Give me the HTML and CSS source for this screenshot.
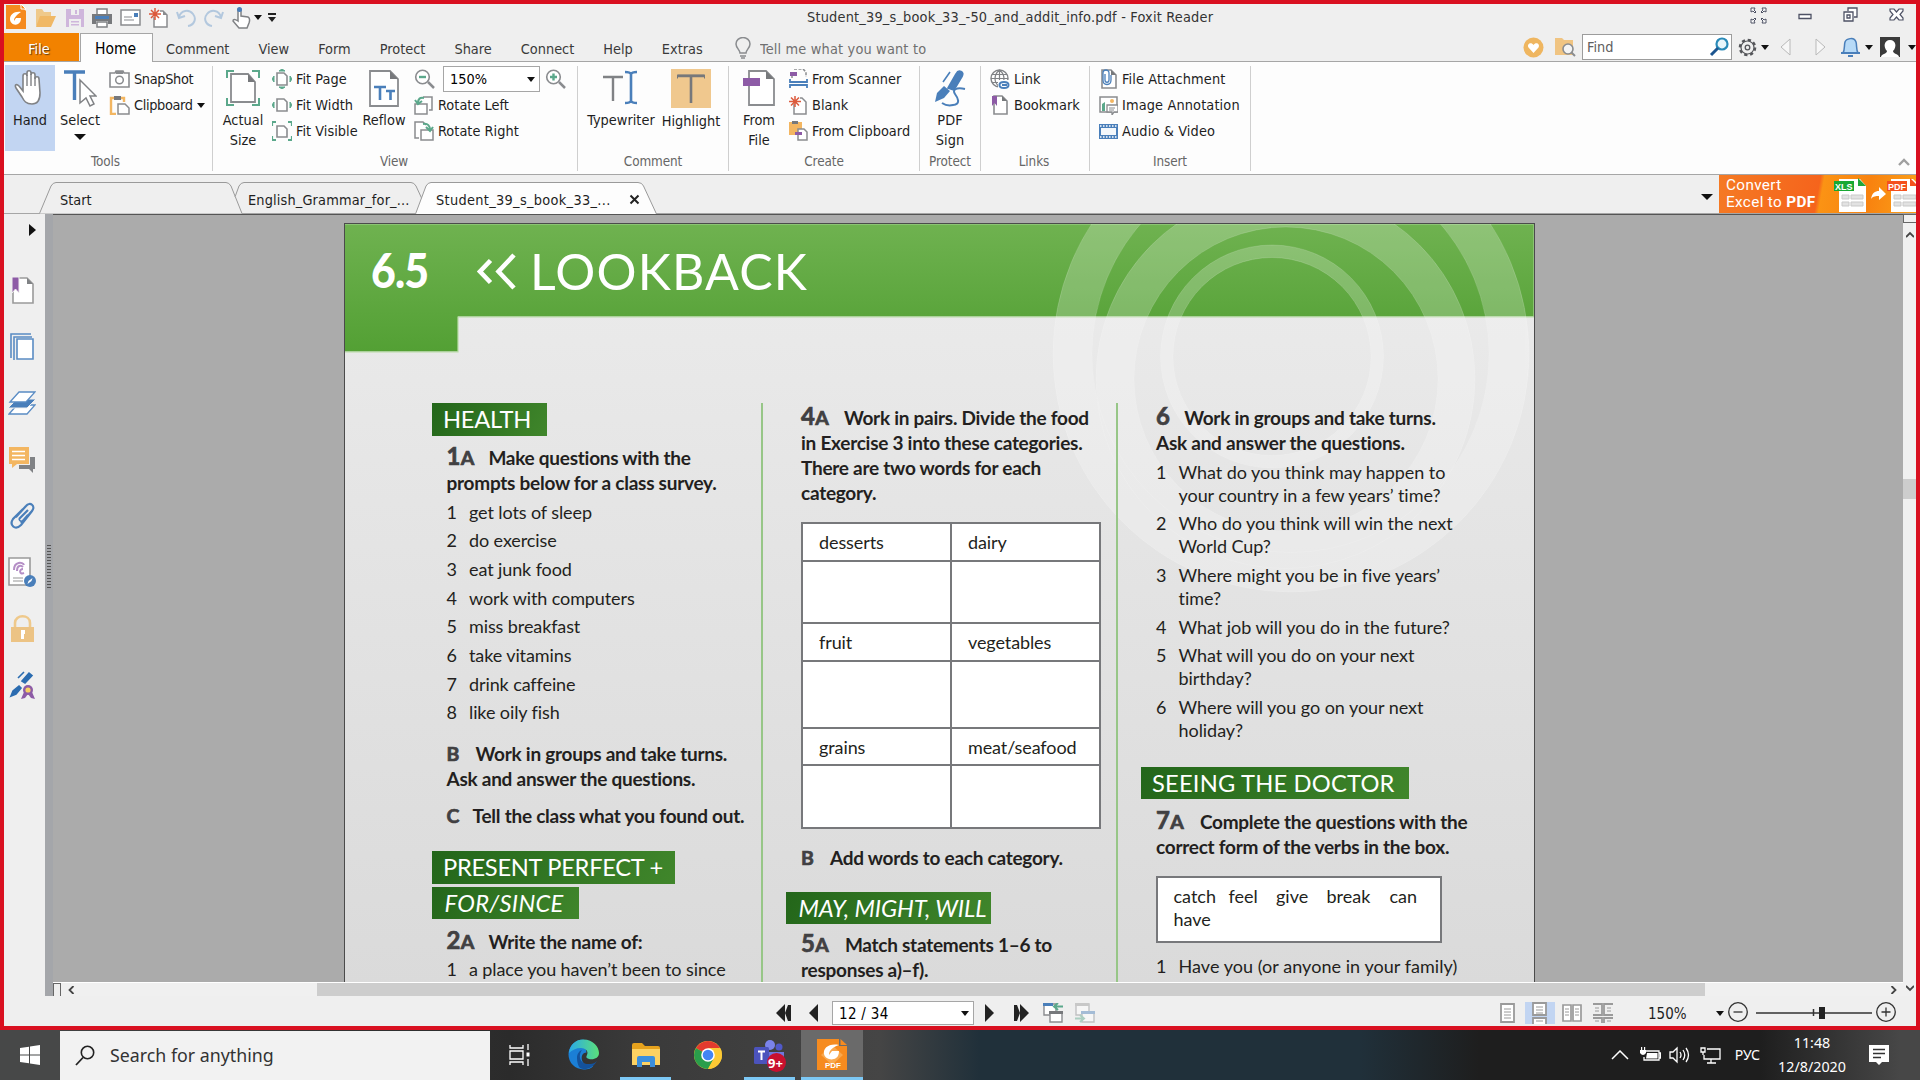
FILE: index.html
```html
<!DOCTYPE html>
<html lang="en">
<head>
<meta charset="utf-8">
<title>Foxit Reader</title>
<link rel="stylesheet" href="styles.css">
</head>
<body>
<div class="window">

  <header class="titlebar">
    <div class="quick">
      <svg class="q-logo" width="20" height="25" viewBox="0 0 20 25"><path d="M0 1h14l6 6v18H0z" fill="#f58a1f"/><path d="M15 0l5 5h-5z" fill="#f58a1f" stroke="#fff" stroke-width="1"/><path d="M15 8C8 7 4 11 4 15s4 7 8 5c2-1 3-3 3-6h-5l-2 3c0-4 3-6 7-9z" fill="#fff"/></svg>
      <svg class="q-open" width="21" height="20" viewBox="0 0 21 20"><path d="M1 18V1h6l2 3h7v4" fill="#efc98b"/><path d="M1 19l4-11h16l-5 11z" fill="#f0b866"/></svg>
      <svg class="q-save" width="18" height="20" viewBox="0 0 18 20"><path d="M0 1h18v18H0z" fill="#cfb6dc"/><path d="M5 1h8v6H5zM3 11h12v8H3z" fill="#efefef"/><path d="M9 2h2v4H9zM5 13h8v1.500H5zM5 16h8v1.500H5z" fill="#cfb6dc"/></svg>
      <svg class="q-print" width="20" height="20" viewBox="0 0 20 20"><path d="M5 1h10v6H5zM5 14h10v5H5z" fill="#fff" stroke="#808285" stroke-width="1.500"/><path d="M0 6h20v10h-4v-3H4v3H0z" fill="#77797c"/><path d="M3 8h14v3H3z" fill="#4a7fba"/></svg>
      <svg class="q-mail" width="21" height="17" viewBox="0 0 21 17"><path d="M1 1h19v15H1z" fill="#fff" stroke="#8a8c8f" stroke-width="1.500"/><path d="M4 8h8M4 11h10" stroke="#8a8c8f" stroke-width="1.200"/><path d="M14 4h4v4h-4z" fill="#4a7fba"/></svg>
      <svg class="q-new" width="19" height="20" viewBox="0 0 19 20"><path d="M5 9v10h13V7l-4-4h-3" fill="#fff" stroke="#8a8c8f" stroke-width="1.500"/><path d="M14 3v4h4z" fill="#8a8c8f"/><path d="M6 0v12M0 6h12M2 2l8 8M10 2l-8 8" stroke="#dc5a3c" stroke-width="1.500"/></svg>
      <svg class="q-undo" width="20" height="20" viewBox="0 0 20 20"><path d="M3 9C5 2 13 1 17 6s1 11-5 12M1 4l2 6 6-2" fill="none" stroke="#b3c8de" stroke-width="2"/></svg>
      <svg class="q-redo" width="20" height="20" viewBox="0 0 20 20"><path d="M17 9C15 2 7 1 3 6s-1 11 5 12M19 4l-2 6-6-2" fill="none" stroke="#b3c8de" stroke-width="2"/></svg>
      <svg class="q-touch" width="19" height="22" viewBox="0 0 19 22"><path d="M6 13V3c0-2 3-2 3 0v6l7 1c2 1 2 3 1 6l-2 5H7l-6-7c0-2 2-2 5 0z" fill="#fff" stroke="#808285" stroke-width="1.500"/><circle cx="7.500" cy="2.500" r="2.500" fill="#4a7fba"/></svg>
      <i class="arrow q-a1"></i>
      <svg class="q-a2" width="8" height="9" viewBox="0 0 8 9"><path d="M0 0h8v2H0zM0 4h8L4 9z" fill="#222"/></svg>
    </div>
    <div class="title">Student_39_s_book_33_-50_and_addit_info.pdf - Foxit Reader</div>
    <div class="wbuttons">
      <svg width="17" height="17" viewBox="0 0 17 17" fill="#fff" stroke="#4e5265"><path d="M1 1h4l-1 2 2 2-1 1-2-2-2 1zM16 1h-4l1 2-2 2 1 1 2-2 2 1zM1 16h4l-1-2 2-2-1-1-2 2-2-1zM16 16h-4l1-2-2-2 1-1 2 2 2-1z"/></svg>
      <svg width="14" height="17" viewBox="0 0 14 17"><path d="M1 7.500h12v4H1z" fill="#fff" stroke="#4e5265" stroke-width="1.300"/></svg>
      <svg width="15" height="17" viewBox="0 0 15 17"><path d="M5 4V1h9v9h-3M1 5h9v9H1zM4 8h3v3H4z" fill="#fff" stroke="#4e5265" stroke-width="1.300"/></svg>
      <svg width="15" height="17" viewBox="0 0 15 17"><path d="M1 2h4l2.500 3L10 2h4v2l-3 3.500 3 3.500v2h-4l-2.500-3L5 13H1v-2l3-3.500L1 4z" fill="#fff" stroke="#4e5265" stroke-width="1.200"/></svg>
    </div>
  </header>

  <nav class="menu">
    <div class="m-file">File</div>
    <div class="m-home">Home</div>
    <div class="m-items"><span>Comment</span><span>View</span><span>Form</span><span>Protect</span><span>Share</span><span>Connect</span><span>Help</span><span>Extras</span></div>
    <svg class="bulb" width="16" height="22" viewBox="0 0 16 22" fill="none" stroke="#8a8c8f" stroke-width="1.500"><path d="M5 16c0-3-4-5-4-9a7 6.500 0 0 1 14 0c0 4-4 6-4 9zM5 19h6M6 21h4"/></svg>
    <div class="tell">Tell me what you want to</div>
    <div class="m-right">
      <svg width="21" height="21" viewBox="0 0 21 21"><circle cx="10.500" cy="10.500" r="10" fill="#efb660"/><path d="M10.500 16L5.500 10.500c-2-4 3-6 5-2.500 2-3.500 7-1.500 5 2.500z" fill="#fff"/></svg>
      <svg class="r-folder" width="21" height="20" viewBox="0 0 21 20"><path d="M0 18V1h7l2 2h9v15z" fill="#f0c482"/><circle cx="13" cy="12" r="5" fill="#f4f4f4" stroke="#8a8c8f" stroke-width="1.600"/><path d="M16.500 15.500L20 19" stroke="#8a8c8f" stroke-width="2"/></svg>
      <div class="find"><span>Find</span><svg width="20" height="20" viewBox="0 0 20 20"><circle cx="13" cy="7" r="5.500" fill="#e8f6fb" stroke="#2a8ab8" stroke-width="2.200"/><path d="M9 11l-7 7" stroke="#1c5590" stroke-width="3"/></svg></div>
      <svg class="r-gear" width="19" height="19" viewBox="0 0 19 19" fill="none" stroke="#55565a"><circle cx="9.500" cy="9.500" r="7.500" stroke-width="2.600" stroke-dasharray="3.200 2.690"/><circle cx="9.500" cy="9.500" r="6.500" fill="#efefef" stroke-width="1.200"/><circle cx="9.500" cy="9.500" r="2.300" stroke-width="1.300"/></svg>
      <i class="arrow r-a1"></i>
      <svg class="r-l" width="11" height="18" viewBox="0 0 11 18"><path d="M10 1v16L1 9z" fill="#f7f7f7" stroke="#b9b9b9"/></svg>
      <svg class="r-r" width="11" height="18" viewBox="0 0 11 18"><path d="M1 1v16l9-8z" fill="#f7f7f7" stroke="#b9b9b9"/></svg>
      <svg class="r-bell" width="19" height="20" viewBox="0 0 19 20"><path d="M2 16c2-3 1-8 2-11s9-6 11 0c1 3 0 8 2 11z" fill="#b7daf7" stroke="#4a7fba" stroke-width="1.500"/><path d="M0 15h19v2H0zM7 18h5v2H7z" fill="#4a7fba"/></svg>
      <i class="arrow r-a2"></i>
      <svg class="r-user" width="20" height="20" viewBox="0 0 20 20"><path d="M0 0h20v20H0z" fill="#3b3b3b"/><path d="M1 20c0-3 6-3 6-6-4-4-3-11 3-11s7 7 3 11c0 3 6 3 6 6z" fill="#fff"/></svg>
      <i class="arrow r-a3"></i>
    </div>
  </nav>

  <section class="ribbon">
    <div class="grp g-tools">
      <div class="body">
        <div class="big on w50"><svg width="32" height="38" viewBox="0 0 32 38"><path d="M9 22V7c0-3 4-3 4 0V4c0-3 4-3 4 0v2c0-3 4-3 4 0v4c0-3 4-3 4 0l1 14c0 7-3 11-8 11-6 0-8-3-10-7L2 19c-2-4 1-4 3-2z" fill="#fff" stroke="#808285" stroke-width="1.600"/><path d="M13 6v11M17 5v12M21 8v9" stroke="#808285" stroke-width="1.400"/></svg><b>Hand</b></div>
        <div class="big w50"><svg width="34" height="38" viewBox="0 0 34 38"><path d="M1 3h21M11.500 3v28" stroke="#4a7fba" stroke-width="3.400"/><path d="M17 11v23l6-5 4 8 4-2-4-8h6z" fill="#fff" stroke="#808285" stroke-width="1.500"/></svg><b>Select</b><i class="arrow xl"></i></div>
        <div class="col">
          <p><svg width="21" height="18" viewBox="0 0 21 18"><path d="M1 3h5l1-2h7l1 2h5v14H1z" fill="#fff" stroke="#8a8c8f" stroke-width="1.600"/><path d="M7 1h7v3H7z" fill="#8a8c8f"/><circle cx="10.500" cy="10" r="3.800" fill="none" stroke="#8a8c8f" stroke-width="1.500"/></svg>SnapShot</p>
          <p><svg width="21" height="20" viewBox="0 0 21 20"><path d="M7 19H2V3h13v4" fill="none" stroke="#f3b661" stroke-width="2.400"/><path d="M5 1h7v4H5z" fill="#77797c"/><path d="M9 9h7l4 4v6H9z" fill="#fff" stroke="#8a8c8f" stroke-width="1.500"/></svg>Clipboard<i class="arrow"></i></p>
        </div>
      </div>
      <h6>Tools</h6>
    </div>
    <div class="grp g-view">
      <div class="body">
        <div class="big w54"><svg width="36" height="38" viewBox="0 0 36 38"><path d="M2 9V2h7M27 2h7v7M34 29v7h-7M9 36H2v-7" fill="none" stroke="#5ba88b" stroke-width="2"/><path d="M6 5h17l7 8v20H6z" fill="#fff" stroke="#8a8c8f" stroke-width="1.800"/><path d="M23 5v8h7z" fill="#77797c"/></svg><b>Actual<br>Size</b></div>
        <div class="col">
          <p><svg width="20" height="20" viewBox="0 0 20 20"><path d="M5 4h7l3 3v9H5z" fill="#fff" stroke="#8a8c8f" stroke-width="1.600"/><path d="M7 2l3-2 3 2zM7 18l3 2 3-2zM2 7l-2 3 2 3zM18 7l2 3-2 3z" fill="#5ba88b" stroke="#5ba88b"/></svg>Fit Page</p>
          <p><svg width="20" height="20" viewBox="0 0 20 20"><path d="M5 4h7l3 3v9H5z" fill="#fff" stroke="#8a8c8f" stroke-width="1.600"/><path d="M2 7l-2 3 2 3zM18 7l2 3-2 3z" fill="#5ba88b" stroke="#5ba88b"/></svg>Fit Width</p>
          <p><svg width="20" height="20" viewBox="0 0 20 20"><path d="M5 5h7l3 3v8H5z" fill="#fff" stroke="#8a8c8f" stroke-width="1.600"/><path d="M0 5V1h4M16 1h4v4M20 15v4h-4M4 19H0v-4" fill="none" stroke="#5ba88b" stroke-width="2.200"/></svg>Fit Visible</p>
        </div>
        <div class="big w52"><svg width="30" height="38" viewBox="0 0 30 38"><path d="M1 2h20l8 8v27H1z" fill="#fff" stroke="#8a8c8f" stroke-width="1.800"/><path d="M21 2v8h8z" fill="#77797c"/><path d="M5 18h12M11 18v13M17 22h9M21.500 22v9" stroke="#4a7fba" stroke-width="2.600"/></svg><b>Reflow</b></div>
        <div class="col c-zoom">
          <div class="zrow"><svg width="21" height="20" viewBox="0 0 21 20"><circle cx="8.500" cy="8" r="6.800" fill="#fff" stroke="#8a8c8f" stroke-width="1.600"/><path d="M5 8h7" stroke="#5ba88b" stroke-width="2.400"/><path d="M14 13l6 6" stroke="#8a8c8f" stroke-width="2.500"/></svg><div class="combo">150%<i class="arrow"></i></div><svg class="zin" width="21" height="20" viewBox="0 0 21 20"><circle cx="8.500" cy="8" r="6.800" fill="#fff" stroke="#8a8c8f" stroke-width="1.600"/><path d="M5 8h7M8.500 4.500v7" stroke="#5ba88b" stroke-width="2.400"/><path d="M14 13l6 6" stroke="#8a8c8f" stroke-width="2.500"/></svg></div>
          <p><svg width="20" height="20" viewBox="0 0 20 20"><path d="M9 2h9v13h-3M1 9h12v10H1z" fill="#fff" stroke="#8a8c8f" stroke-width="1.500"/><path d="M10 3C6 2 4 4 4 8M1 5l3 4 4-3" fill="none" stroke="#5ba88b" stroke-width="2"/></svg>Rotate Left</p>
          <p><svg width="20" height="20" viewBox="0 0 20 20"><path d="M5 17H1V1h8l3 3M7 9h12v10H7z" fill="#fff" stroke="#8a8c8f" stroke-width="1.500"/><path d="M9 3c5-1 7 2 7 6M12 6l4 4 3-4" fill="none" stroke="#5ba88b" stroke-width="2"/></svg>Rotate Right</p>
        </div>
      </div>
      <h6>View</h6>
    </div>
    <div class="grp g-comment">
      <div class="body">
        <div class="big w70"><svg width="36" height="38" viewBox="0 0 36 38"><path d="M0 8h20M10 8v24" stroke="#808285" stroke-width="2.400"/><path d="M22 3c3 0 5 0 6 2 1-2 3-2 6-2M22 34c3 0 5 0 6-2 1 2 3 2 6 2M28 4v29" fill="none" stroke="#4a7fba" stroke-width="2.600"/></svg><b>Typewriter</b></div>
        <div class="big w70"><svg width="40" height="39" viewBox="0 0 40 39"><path d="M0 0h40v39H0z" fill="#f0c88e"/><path d="M6 7h28M20 7v27" stroke="#77787b" stroke-width="2.600"/><path d="M6.500 9.500V6h27v3.500" fill="none" stroke="#77787b"/></svg><b>Highlight</b></div>
      </div>
      <h6>Comment</h6>
    </div>
    <div class="grp g-create">
      <div class="body">
        <div class="big w56"><svg width="32" height="38" viewBox="0 0 32 38"><path d="M6 2h17l8 8v26H6z" fill="#fff" stroke="#8a8c8f" stroke-width="1.800"/><path d="M23 2v8h8z" fill="#77797c"/><path d="M0 9h17v8H0z" fill="#8d5ba6"/></svg><b>From<br>File</b></div>
        <div class="col">
          <p><svg width="19" height="20" viewBox="0 0 19 20"><path d="M5 0h9l3 3v5M3 9V5" fill="none" stroke="#8a8c8f" stroke-width="1.500" stroke-dasharray="3 1.500"/><path d="M1 3h7v4H1z" fill="#8d5ba6"/><path d="M1 10v3h17v-3M1 19v-3h17v3" fill="none" stroke="#4a7fba" stroke-width="1.800"/></svg>From Scanner</p>
          <p><svg width="19" height="20" viewBox="0 0 19 20"><path d="M5 9v10h12V7l-4-4h-2" fill="#fff" stroke="#8a8c8f" stroke-width="1.500"/><path d="M6 1v11M0 6.500h12M2 2.500l8 8M10 2.500l-8 8" stroke="#dc5a3c" stroke-width="1.500"/></svg>Blank</p>
          <p><svg width="19" height="20" viewBox="0 0 19 20"><path d="M0 1h13v13H0z" fill="#f3b661"/><path d="M3 0h6v3H3z" fill="#77797c"/><path d="M9 8h6l3 3v8H9z" fill="#fff" stroke="#8a8c8f" stroke-width="1.500"/><path d="M6 11h7v3H6z" fill="#8d5ba6"/></svg>From Clipboard</p>
        </div>
      </div>
      <h6>Create</h6>
    </div>
    <div class="grp g-protect">
      <div class="body"><div class="big w60"><svg width="32" height="38" viewBox="0 0 32 38"><path d="M14 19l8-14q2-4 5-2.500t1 5L20 21zM16 3l-7 10" stroke="#4a7fba" stroke-width="1.600" fill="#4a7fba"/><path d="M1 33l2-9 7-7 6 5-6 7z" fill="#4a7fba"/><path d="M31 20c-9-2-13 1-10 5s6 10-2 11c-4 1-8 0-11-2" fill="none" stroke="#4a7fba" stroke-width="2"/></svg><b>PDF<br>Sign</b></div></div>
      <h6>Protect</h6>
    </div>
    <div class="grp g-links">
      <div class="body"><div class="col">
        <p><svg width="20" height="20" viewBox="0 0 20 20"><circle cx="9.500" cy="9.500" r="8.500" fill="#fff" stroke="#808285" stroke-width="1.400"/><path d="M9.500 1v17M1 9.500h17M2 5.500h15M2 13.500h15M9.500 1c-6 5-6 12 0 17M9.500 1c6 5 6 12 0 17" fill="none" stroke="#808285" stroke-width="1.200"/><path d="M8 11h12v9H8z" fill="#fdfdfd"/><path d="M14 19c-6 0-6-6 0-6M14 13c6 0 6 6 0 6M12 16h5" fill="none" stroke="#4a7fba" stroke-width="2"/></svg>Link</p>
        <p><svg width="20" height="20" viewBox="0 0 20 20"><path d="M4 1h8l5 5v13H4z" fill="#fff" stroke="#8a8c8f" stroke-width="1.600"/><path d="M2 1h5v10l-2.500-3L2 11z" fill="#8d5ba6"/><path d="M12 1v5h5z" fill="#77797c"/></svg>Bookmark</p>
      </div></div>
      <h6>Links</h6>
    </div>
    <div class="grp g-insert">
      <div class="body"><div class="col">
        <p><svg width="19" height="20" viewBox="0 0 19 20"><path d="M3 1h9l5 5v13H3z" fill="#fff" stroke="#8a8c8f" stroke-width="1.600"/><path d="M12 1v5h5z" fill="#77797c"/><path d="M6 5v6c0 3 4 3 4 0V4c0-4-6-4-6 0v7c0 6 8 6 8 0V6" fill="none" stroke="#4a7fba" stroke-width="1.300"/></svg>File Attachment</p>
        <p><svg width="19" height="20" viewBox="0 0 19 20"><path d="M1 2h17v15H1z" fill="#fff" stroke="#8a8c8f" stroke-width="1.500"/><circle cx="13" cy="6" r="2" fill="#f3b661"/><path d="M3 16V9l3-2v9z" fill="#5ba88b"/><path d="M8 10h11v7h-4l-2 3v-3H8z" fill="#fff" stroke="#8a8c8f" stroke-width="1.300"/><path d="M10 13h6M10 15h5" stroke="#8a8c8f"/></svg>Image Annotation</p>
        <p><svg width="19" height="20" viewBox="0 0 19 20"><path d="M0 3h19v15H0z" fill="#4a7fba"/><path d="M2 7h15v7H2z" fill="#f3f7fb"/><path d="M1 5h17M1 16h17" stroke="#fff" stroke-width="1.500" stroke-dasharray="1.500 1.500"/></svg>Audio &amp; Video</p>
      </div></div>
      <h6>Insert</h6>
    </div>
    <svg class="collapse" width="12" height="8" viewBox="0 0 12 8"><path d="M1 7l5-5 5 5" fill="none" stroke="#a0a0a0" stroke-width="2.400"/></svg>
  </section>

  <div class="tabs">
    <svg class="tabshape" width="660" height="39" viewBox="0 0 660 39"><g stroke="#9a9a9a" stroke-width="1" fill="#efefef"><path d="M35.500 38.500L47 11q2-3.500 5-3.500h170q3 0 5 3.500L238 38.500"/><path d="M231 22L235 11q2-3.500 5-3.500h167q3 0 5 3.500L418 24"/><path d="M411.500 39L422 11q2-3.500 5-3.500h207q4 0 5.500 3.500L652.500 39" fill="#fdfdfd"/></g></svg>
    <div class="tablabels"><span class="t1">Start</span><span class="t2">English_Grammar_for_...</span><span class="t3">Student_39_s_book_33_...</span><svg width="11" height="11" viewBox="0 0 11 11"><path d="M1.500 1.500l8 8M9.500 1.500l-8 8" stroke="#222" stroke-width="2"/></svg></div>
    <i class="arrow xl t-arrow"></i>
    <div class="promo">
      <div>Convert<br>Excel to <b>PDF</b></div>
      <svg width="84" height="38" viewBox="0 0 84 38"><path d="M5 4h21l6 7v26H5z" fill="#fff"/><path d="M24 3v8h8z" fill="#1ea63a"/><path d="M0 6h20v10H0z" fill="#18a832"/><path d="M8 20h7v4H8zM17 20h12v4H17zM8 27h7v4H8zM17 27h12v4H17z" fill="#e2e2e2" stroke="#c9c9c9"/><path d="M37 24c1-6 4-8 8-8v-4l7 7-7 6v-4c-3 0-6 0-8 3z" fill="#fff"/><path d="M57 4h22l5 5v28H57z" fill="#fff"/><path d="M76 3v8h8z" fill="#f4511e"/><path d="M53 6h20v10H53z" fill="#f4511e"/><path d="M60 20h7v4h-7zM69 20h13v4H69zM60 27h7v4h-7zM69 27h13v4H69z" fill="#e2e2e2" stroke="#c9c9c9"/><text x="1" y="14.500" class="fmt">XLS</text><text x="54" y="14.500" class="fmt">PDF</text></svg>
    </div>
  </div>

  <main class="main">
    <aside class="side">
      <svg class="s-open" width="7" height="12" viewBox="0 0 7 12"><path d="M0 0l7 6-7 6z" fill="#111"/></svg>
      <svg width="28" height="30" viewBox="0 0 28 30"><path d="M5 3h14l6 6v19H5z" fill="#fff" stroke="#9a9a9a" stroke-width="1.600"/><path d="M19 3v6h6z" fill="#808285"/><path d="M4 2h7v16l-3.500-4L4 18z" fill="#8d5ba6" stroke="#efefef" stroke-width="1"/></svg>
      <svg width="28" height="30" viewBox="0 0 28 30"><path d="M3 26V2h20M6 28V5h18" fill="none" stroke="#5a8cc4" stroke-width="1.600"/><path d="M9 7h16v20H9z" fill="#fff" stroke="#5a8cc4" stroke-width="1.600"/></svg>
      <svg width="28" height="30" viewBox="0 0 28 30"><path d="M1 26L9 17h18l-8 9z" fill="#fff" stroke="#5a8cc4" stroke-width="1.300"/><path d="M0 20l9-9h19l-9 9z" fill="#4a7fba" stroke="#efefef"/><path d="M2 14l9-10h16l-9 10z" fill="#fff" stroke="#5a8cc4" stroke-width="1.300"/></svg>
      <svg width="28" height="30" viewBox="0 0 28 30"><path d="M11 22V12h16v12h-2v4l-4-4H11z" fill="#808285"/><path d="M0 1h22v19H0z" fill="#efefef"/><path d="M1 2h20v17H9l-5 4v-4H1z" fill="#f3b661"/><path d="M4 6.500h13M4 10.500h13M4 14.500h13" stroke="#fff" stroke-width="1.600"/></svg>
      <svg width="28" height="30" viewBox="0 0 28 30"><path d="M11 18l9-9M8 16L18 5c4-5 10 0 6 5L13 24c-6 6-12 0-8-6L15 8m5 6l-7 8" fill="none" stroke="#4a7fba" stroke-width="2.200"/><path d="M11 18c1 3 3 3 5 1l7-8" fill="none" stroke="#4a7fba" stroke-width="1.600"/></svg>
      <svg width="28" height="30" viewBox="0 0 28 30"><path d="M1 1h21v27H1z" fill="#fff" stroke="#9a9a9a" stroke-width="1.600"/><path d="M6 13c0-9 9-8 10-5M9 14c0-6 4-6 6-4M16 16c-5 2-5-4-1-4" fill="none" stroke="#b58fc6" stroke-width="2"/><path d="M5 21h10M5 24h10" stroke="#b9b9b9" stroke-width="1.500"/><circle cx="22" cy="24" r="6" fill="#4a7fba"/><path d="M19.500 27l1-3 4-3-1 3z" fill="#fff"/></svg>
      <svg width="28" height="30" viewBox="0 0 28 30"><path d="M7 14V9c0-9 15-9 15 0v5" fill="none" stroke="#efc98b" stroke-width="2.600"/><path d="M3 13h23v15H3z" fill="#ecc384"/><path d="M13 16h4v4h-1v5h-3v-5z" fill="#fff"/></svg>
      <svg width="28" height="30" viewBox="0 0 28 30"><path d="M14 11l7-8 3 2.500-7 7.500zM10 8l6-6M3 26l2-5 6-5 2 2-5 6z" fill="#2b6cb0" stroke="#2b6cb0" stroke-width="1.600"/><path d="M16 22l-3 7 4-1 3-4 3 4 4 1-3-7z" fill="#8d5ba6"/><circle cx="20" cy="20" r="5" fill="#8d5ba6"/><circle cx="20" cy="20" r="2.600" fill="#f7d064"/></svg>
    </aside>
    <div class="splitter"><i></i></div>
    <div class="viewer">
      <div class="canvas">
        <article class="page">
          <svg class="banner" width="1189" height="758" viewBox="0 0 1189 758">
            <defs><linearGradient id="green" x1="0" y1="0" x2="0" y2="1"><stop offset="0" stop-color="#6fb250"/><stop offset="1" stop-color="#53a034"/></linearGradient></defs>
            <path d="M0 0h1189v92.500H113v35H0z" fill="url(#green)"/>
            <path d="M1189 93H113v35H0" fill="none" stroke="#b9dba8" stroke-width="1.200"/>
            <path d="M0 .500h1189M1188.500 0v92" stroke="#8cc474" fill="none"/>
            <g opacity=".22" fill="#fff">
              <path fill-rule="evenodd" d="M708 130a238 238 0 1 0 476 0a238 238 0 1 0-476 0M747 130a198.500 198.500 0 1 1 397 0a198.500 198.500 0 1 1-397 0"/>
              <path fill-rule="evenodd" d="M751 155a189.500 189.500 0 1 0 379 0a189.500 189.500 0 1 0-379 0M789 155a152 152 0 1 1 304 0a152 152 0 1 1-304 0"/>
              <path fill-rule="evenodd" d="M815.500 132.500a111.500 111.500 0 1 0 223 0a111.500 111.500 0 1 0-223 0M828 132.500a99 99 0 1 1 198 0a99 99 0 1 1-198 0"/>
            </g>
            <g opacity=".15" fill="none" stroke="#fff"><circle cx="946" cy="130" r="238"/><circle cx="945.500" cy="130" r="198.500"/><circle cx="940.500" cy="155" r="189.500"/><circle cx="941" cy="155" r="152"/><circle cx="927" cy="132.500" r="111.500"/><circle cx="927" cy="132.500" r="99"/></g>
          </svg>
          <div class="head"><strong>6.5</strong><svg width="42" height="38" viewBox="0 0 42 38"><path d="M14.500 8.500L4 19.500l10.500 11M38 3L22.500 19.500 38 36" fill="none" stroke="#fff" stroke-width="4.600"/></svg><span>LOOKBACK</span></div>
          <div class="columns">
            <div class="c1">
              <h2>HEALTH</h2>
              <h3 class="a"><em>1<small>A</small></em><i class="g14"></i>Make questions with the<br>prompts below for a class survey.</h3>
              <ol class="loose"><li>get lots of sleep</li><li>do exercise</li><li>eat junk food</li><li>work with computers</li><li>miss breakfast</li><li>take vitamins</li><li>drink caffeine</li><li>like oily fish</li></ol>
              <h3 class="b"><em><small>B</small></em><i class="g16"></i>Work in groups and take turns.<br>Ask and answer the questions.</h3>
              <h3 class="c"><em><small>C</small></em><i class="g13"></i>Tell the class what you found out.</h3>
              <h2 class="pp">PRESENT PERFECT +</h2>
              <h2 class="it fs">FOR/SINCE</h2>
              <h3 class="d"><em>2<small>A</small></em><i class="g14"></i>Write the name of:</h3>
              <ol class="loose last"><li>a place you haven’t been to since</li></ol>
            </div>
            <div class="c2">
              <h3><em>4<small>A</small></em><i class="g15"></i>Work in pairs. Divide the food<br>in Exercise 3 into these categories.<br>There are two words for each<br>category.</h3>
              <div class="food"><span>desserts</span><span>dairy</span><span></span><span></span><span>fruit</span><span>vegetables</span><span></span><span></span><span>grains</span><span>meat/seafood</span><span></span><span></span></div>
              <h3 class="e"><em><small>B</small></em><i class="g16"></i>Add words to each category.</h3>
              <h2 class="it mm">MAY, MIGHT, WILL</h2>
              <h3 class="f"><em>5<small>A</small></em><i class="g16"></i>Match statements 1–6 to<br>responses a)–f).</h3>
            </div>
            <div class="c3">
              <h3><em>6</em><i class="g14"></i>Work in groups and take turns.<br>Ask and answer the questions.</h3>
              <ol class="tight"><li>What do you think may happen to<br>your country in a few years’ time?</li><li>Who do you think will win the next<br>World Cup?</li><li>Where might you be in five years’<br>time?</li><li>What job will you do in the future?</li><li>What will you do on your next<br>birthday?</li><li>Where will you go on your next<br>holiday?</li></ol>
              <h2 class="sd">SEEING THE DOCTOR</h2>
              <h3 class="a"><em>7<small>A</small></em><i class="g16"></i>Complete the questions with the<br>correct form of the verbs in the box.</h3>
              <div class="verbs"><span>catch</span><span>feel</span><span>give</span><span>break</span><span>can</span><span>have</span></div>
              <ol class="tight last"><li>Have you (or anyone in your family)</li></ol>
            </div>
          </div>
        </article>
      </div>
      <div class="hscroll">
        <i class="hbox"></i>
        <svg width="7" height="8" viewBox="0 0 7 8"><path d="M5.500 0L1.500 4l4 4" fill="none" stroke="#444" stroke-width="1.800"/></svg>
        <i class="hthumb"></i>
        <svg width="7" height="8" viewBox="0 0 7 8"><path d="M1.500 0l4 4-4 4" fill="none" stroke="#444" stroke-width="1.800"/></svg>
      </div>
    </div>
    <div class="vscroll">
      <i class="vbox"></i>
      <svg class="v-up" width="8" height="7" viewBox="0 0 8 7"><path d="M0 6l4-4 4 4" fill="none" stroke="#444" stroke-width="1.800"/></svg>
      <i class="vthumb"></i>
      <svg class="v-down" width="8" height="7" viewBox="0 0 8 7"><path d="M0 1l4 4 4-4" fill="none" stroke="#444" stroke-width="1.800"/></svg>
    </div>
  </main>

  <footer class="status">
    <svg class="n1" width="16" height="18" viewBox="0 0 16 18"><path d="M9 0v18L0 9zM15 1v16h-3l-3-8 3-8z" fill="#222"/></svg>
    <svg class="n2" width="9" height="18" viewBox="0 0 9 18"><path d="M9 0v18L0 9z" fill="#222"/></svg>
    <div class="pagebox">12 / 34<i class="arrow"></i></div>
    <svg class="n3" width="9" height="18" viewBox="0 0 9 18"><path d="M0 0v18l9-9z" fill="#222"/></svg>
    <svg class="n4" width="16" height="18" viewBox="0 0 16 18"><path d="M7 0v18l9-9zM1 1v16h3l3-8-3-8z" fill="#222"/></svg>
    <svg class="n5" width="20" height="20" viewBox="0 0 20 20"><path d="M1 1h12v11H1z" fill="#fff" stroke="#8a8c8f" stroke-width="1.400"/><path d="M0 0h10v3H0z" fill="#4a7fba"/><path d="M7 9h12v10H7z" fill="#fff" stroke="#8a8c8f" stroke-width="1.400"/><path d="M6 8h14v3H6z" fill="#77797c"/><path d="M20 3.500h-8M15 0l-4 3.500L15 7" fill="none" stroke="#5ba88b" stroke-width="2"/></svg>
    <svg class="n6" width="20" height="20" viewBox="0 0 20 20" opacity=".45"><path d="M1 1h13v11H1z" fill="#fff" stroke="#8a8c8f" stroke-width="1.400"/><path d="M0 0h14v3H0z" fill="#9a9a9a"/><path d="M7 9h12v10H7z" fill="#fff" stroke="#8a8c8f" stroke-width="1.400"/><path d="M6 8h14v3H6z" fill="#4a7fba"/><path d="M0 15.500h8M5 12l4 3.500L5 19" fill="none" stroke="#5ba88b" stroke-width="2"/></svg>
    <div class="modes">
      <svg width="15" height="20" viewBox="0 0 15 20"><path d="M1 1h13v18H1z" fill="#fff" stroke="#9a9a9a" stroke-width="1.800"/><path d="M4 6h7M4 9h7M4 12h7M4 15h7" stroke="#9a9a9a"/></svg>
      <svg class="sel" width="30" height="22" viewBox="0 0 30 22"><path d="M8 1h13v12H8zM8 22v-6h13v6" fill="#fff" stroke="#9a9a9a" stroke-width="1.800"/><path d="M11 5h7M11 8h7M11 11h7M11 19h7" stroke="#9a9a9a"/></svg>
      <svg class="two" width="20" height="20" viewBox="0 0 20 20"><path d="M1 2h8v16H1zM11 2h8v16h-8z" fill="#fff" stroke="#9a9a9a" stroke-width="1.700"/><path d="M3 6h4M3 9h4M3 12h4M13 6h4M13 9h4M13 12h4" stroke="#9a9a9a"/></svg>
      <svg class="four" width="20" height="20" viewBox="0 0 20 20"><path d="M0 1h9v11H0M20 1h-9v11h9M0 15h9v5M20 15h-9v5" fill="none" stroke="#9a9a9a" stroke-width="1.800"/><path d="M2 5h4M2 8h4M14 5h4M14 8h4M2 18h4M14 18h4" stroke="#9a9a9a"/></svg>
      <span>150%</span><i class="arrow"></i>
      <svg class="slider" width="148" height="22" viewBox="0 0 148 22" fill="none" stroke="#333"><circle cx="10" cy="11" r="9.300" stroke-width="1.300"/><path d="M5.500 11h9" stroke-width="1.300"/><path d="M28 12h116M85.500 8v7" stroke-width="1.500"/><path d="M91 6h6v12h-6z" fill="#222" stroke="none"/></svg>
      <svg class="plus" width="20" height="22" viewBox="0 0 20 22" fill="none" stroke="#333" stroke-width="1.300"><circle cx="10" cy="11" r="9.300"/><path d="M5.500 11h9M10 6.500v9"/></svg>
    </div>
  </footer>
</div>

<div class="taskbar">
  <div class="start"><svg width="20" height="20" viewBox="0 0 20 20"><path d="M0 3l9-1.300V9.500H0zM10 1.500L20 0v9.500H10zM0 10.500h9v7.800L0 17zM10 10.500h10V20l-10-1.500z" fill="#fff"/></svg></div>
  <div class="search"><svg width="20" height="21" viewBox="0 0 20 21"><circle cx="12.500" cy="7.500" r="6.200" fill="none" stroke="#222" stroke-width="1.600"/><path d="M8 12.500L1 20" stroke="#222" stroke-width="1.800"/></svg>Search for anything</div>
  <div class="apps">
    <div class="app task"><svg width="22" height="22" viewBox="0 0 22 22" fill="none" stroke="#fff" stroke-width="1.300"><path d="M1 1v3h13V1M1 7h13v8H1zM1 21v-3h13v3M19 0v6M19 15v7"/><path d="M17.500 8.500h3v4h-3z" fill="#fff" stroke="none"/></svg></div>
    <div class="app edge"><svg width="31" height="31" viewBox="0 0 31 31"><defs><linearGradient id="eg" x1="0" y1="0" x2="1" y2="0"><stop offset="0" stop-color="#2aa9e8"/><stop offset="1" stop-color="#5be07a"/></linearGradient></defs><path d="M15.500.5a15 15 0 0 0 0 30c5 0 8-1 10-4-4 2-9 0-11-4-2-5 0-9 4-9z" fill="#1b7fd6"/><path d="M1 14C2 5 8 .5 15.500.5 25 .5 31 8 31 14c0 5-5 7-10 6-3-1-3-2-2-4 2-4-2-7-6-7-5 0-9 2-12 5z" fill="url(#eg)"/><path d="M9 19c0-4 2-7 5-8-5 7-1 15 8 14 3 0 5-1 7-3-4 7-12 10-17 7-2-2-3-6-3-10z" fill="#14529c"/></svg></div>
    <div class="app run expl"><svg width="28" height="24" viewBox="0 0 28 24"><path d="M0 2q0-2 2-2h8l3 3h13q2 0 2 2v17H0z" fill="#e6a21d"/><path d="M0 6h28v16H0z" fill="#fdd262"/><path d="M5 24V15q0-2 2-2h14q2 0 2 2v9h-5v-5h-8v5z" fill="#3c8fdc"/></svg></div>
    <div class="app chrome"><svg width="28" height="28" viewBox="0 0 28 28"><circle cx="14" cy="14" r="14" fill="#fcc934"/><path d="M14 14L1.900 7A14 14 0 0 1 26.100 7z" fill="#e33b2e"/><path d="M14 14L1.900 7A14 14 0 0 0 14 28l6-10.500z" fill="#2a9e4b"/><path d="M14 7h12.100A14 14 0 0 1 14 28l6-11z" fill="#fcc934"/><circle cx="14" cy="14" r="6.800" fill="#fff"/><circle cx="14" cy="14" r="5.300" fill="#4285f4"/></svg></div>
    <div class="app run teams"><svg width="32" height="32" viewBox="0 0 32 32"><circle cx="16" cy="5" r="5" fill="#7b83eb"/><circle cx="25" cy="7" r="3.500" fill="#5059c9"/><path d="M12 12h18v9q-4 8-12 7z" fill="#6f78dd"/><rect y="7" width="15" height="17" rx="1.500" fill="#4b53bc"/><path d="M4 11.500h7M7.500 11.500V20" stroke="#fff" stroke-width="2"/><circle cx="22.500" cy="22.500" r="9.500" fill="#c8102e"/></svg><span class="badge">9+</span></div>
    <div class="app run foxit"><svg width="30" height="31" viewBox="0 0 30 31"><path d="M0 0h22v7h8v24H0z" fill="#f68b1f"/><path d="M23.500 0L30 6h-6.500z" fill="#f68b1f"/><path d="M15 6l11 10-11 10L4 16z" fill="#f9a84e"/><path d="M22 6C12 4 6 9 7 15c1 5 8 7 12 4 2-1 3-4 3-7h-7l-3 4c0-5 4-8 10-10z" fill="#fff"/><text x="8" y="29" class="pdf">PDF</text></svg></div>
  </div>
  <div class="tray">
    <svg class="up" width="18" height="10" viewBox="0 0 18 10"><path d="M1 9l8-8 8 8" fill="none" stroke="#fff" stroke-width="1.500"/></svg>
    <svg class="bat" width="21" height="16" viewBox="0 0 21 16"><path d="M5 4h14v9H4v-3M19 6h1.500v5H19" fill="none" stroke="#fff" stroke-width="1.300"/><path d="M7 6h10.500v5.500H6zM0 3h6v3q-3 4-6 0zM1 0h1.200v3H1zM4 0h1.200v3H4z" fill="#fff"/></svg>
    <svg class="spk" width="22" height="18" viewBox="0 0 22 18" fill="none" stroke="#fff" stroke-width="1.300"><path d="M1 6h3l4-4v14l-4-4H1zM11 6q2 3 0 6M14 4q3.500 5 0 10M17 2q5 7 0 14"/></svg>
    <svg class="net" width="21" height="17" viewBox="0 0 21 17" fill="none" stroke="#fff" stroke-width="1.300"><path d="M7 2h13v10H4V8M11 12v4M7 16h9M1 1h4v4H1zM3 5v3"/></svg>
    <span class="lang">РУС</span>
    <div class="clock">11:48<br>12/8/2020</div>
    <svg class="note" width="20" height="20" viewBox="0 0 20 20"><path d="M0 0h20v17h-7l-3 3-3-3H0z" fill="#fff"/><path d="M4 4.500h12M4 8.500h12M4 12.500h8" stroke="#333" stroke-width="1.300"/></svg>
  </div>
</div>
</body>
</html>
```
FILE: styles.css
```css
* { box-sizing: border-box; }
body { margin: 0; width: 1920px; height: 1080px; overflow: hidden; background: #222;
  font: 14.4px/18px "DejaVu Sans Condensed", "Noto Sans", sans-serif; color: #1e1e1e; }
svg { display: block; flex: none; }
p, h2, h3, h6, ol { margin: 0; padding: 0; font-weight: 400; }
span, b { white-space: nowrap; }

.window { height: 1030px; border: 4px solid #d91020; background: #efefef; display: flex; flex-direction: column; }
.arrow { display: block; flex: none; width: 0; height: 0; border: 4px solid transparent; border-top: 5px solid #111; border-bottom: 0; }
.arrow.xl { border-width: 6px 6px 0; }

/* title bar */
.titlebar { flex: none; height: 29px; display: flex; align-items: center; color: #333; }
.quick { width: 803px; flex: none; display: flex; align-items: center; padding-left: 2px; margin-top: -2px; }
.q-logo { margin-right: 9px; margin-top: -3px; } .q-open { margin-right: 10px; } .q-save { margin-right: 8px; }
.q-print, .q-mail { margin-right: 8px; } .q-new { margin-right: 8px; } .q-undo, .q-redo { margin-right: 8px; }
.q-touch { margin-right: 3px; } .q-a1 { margin-right: 6px; }
.title { letter-spacing: .19px; margin-top: -3px; white-space: nowrap; }
.wbuttons { margin-left: auto; display: flex; padding: 0 12px 7px 0; gap: 31px; }

/* menu */
.menu { flex: none; height: 29px; display: flex; align-items: center; border-bottom: 1px solid #a6a6a6; color: #3a3a3a; }
.m-file { width: 75px; height: 28px; padding-right: 5px; background: #f28200; color: #fff; text-align: center; line-height: 32px; text-shadow: 1px 1px 1px #5a3a10; }
.m-home { width: 73px; height: 29px; margin-left: 1px; padding-right: 2px; align-self: flex-start; background: #fdfdfd; border: 1px solid #a6a6a6; border-bottom: 0; text-align: center; line-height: 31px; font-size: 15.500px; color: #000; }
.m-items { display: flex; gap: 29px; padding: 3px 0 0 13px; width: 582px; }
.bulb { margin-top: 2px; }
.tell { margin: 3px 0 0 9px; width: 166px; overflow: hidden; white-space: nowrap; color: #707070; letter-spacing: .17px; }
.m-right { margin-left: auto; display: flex; align-items: center; height: 28px; }
.r-folder { margin: 0 6px 0 11px; }
.find { width: 150px; height: 26px; border: 1px solid #9c9c9c; background: #fff; display: flex; align-items: center; justify-content: space-between; padding: 0 2px 0 4px; color: #606060; }
.r-gear { margin: 0 4px 0 6px; } .r-l { margin: 0 24px 0 11px; } .r-r { margin-right: 15px; }
.r-a2 { margin: 0 7px 0 5px; } .r-user { margin-right: 8px; } .r-a3 { margin-right: 0; }

/* ribbon */
.ribbon { flex: none; height: 113px; background: #fdfdfd; border-bottom: 1px solid #a6a6a6; display: flex; position: relative; letter-spacing: .02px; }
.grp { margin: 4px 0 3px; border-right: 1px solid #cfcfcf; display: flex; flex-direction: column; justify-content: space-between; }
.body { display: flex; }
.grp h6 { font-size: 13.400px; line-height: 18px; color: #666; text-align: center; letter-spacing: -.1px; }
.g-tools { width: 209px; } .g-view { width: 365px; } .g-comment { width: 151px; } .g-create { width: 191px; }
.g-protect { width: 61px; } .g-links { width: 109px; } .g-insert { width: 161px; }
.g-tools h6 { padding-right: 5px; } .g-view h6 { padding-right: 2px; } .g-links h6 { padding-right: 2px; }
.big { height: 86px; padding-top: 4px; display: flex; flex-direction: column; align-items: center; margin-top: -1px; }
.big b { font-weight: 400; line-height: 20px; margin-top: 3px; text-align: center; }
.big .arrow { margin-top: 4px; }
.big.on { background: #c2d5f2; margin-left: 1px; }
.w50 { width: 50px; } .w54 { width: 58px; } .w52 { width: 60px; } .w70 { width: 70px; } .w56 { width: 60px; } .w60 { width: 60px; }
.col p { height: 26px; display: flex; align-items: center; gap: 4px; white-space: nowrap; }
.col .arrow { margin-left: 0; }
.g-tools .col { padding-left: 4px; letter-spacing: -.35px; }
.g-view .w54 { margin-left: 1px; }
.g-view .w52 { margin-left: 0; } .g-view .col { width: 82px; }
.g-view .c-zoom { width: 155px; }
.zrow { display: flex; align-items: center; height: 26px; gap: 8px; }
.zin { margin-left: -3px; }
.combo { width: 97px; height: 26px; border: 1px solid #a6a6a6; background: #fff; display: flex; align-items: center; justify-content: space-between; padding: 0 4px 0 6px; color: #000; }
.g-comment .body { padding-left: 8px; }
.g-links .col, .g-insert .col { padding-left: 9px; }
.g-insert .col { letter-spacing: .13px; }
.collapse { margin: 96px 6px 0 auto; }

/* document tabs */
.tabs { flex: none; height: 39px; border-bottom: 1px solid #a6a6a6; display: flex; align-items: center; position: relative; }
.tabshape { position: absolute; left: 0; top: 0; }
.tablabels { position: relative; display: flex; align-items: center; padding-top: 11px; letter-spacing: .2px; }
.t1 { width: 188px; margin-left: 56px; letter-spacing: 0; } .t2 { width: 188px; letter-spacing: .15px; } .t3 { width: 193px; letter-spacing: .32px; }
.t-arrow { margin: 6px 6px 0 auto; }
.promo { width: 197px; height: 38px; overflow: hidden; display: flex; justify-content: space-between; color: #fff; padding: 0 0 0 7px; background: linear-gradient(100deg, #f57a24, #f5641c 50%, #fb9314 52%, #f8820f 75%, #fba11a); white-space: nowrap; }
.promo svg { margin-right: -2px; }
.promo div { font: 15.300px/17px Roboto, sans-serif; padding-top: 2px; letter-spacing: .35px; }
.fmt { font: 700 9px "Liberation Sans", sans-serif; fill: #fff; }

/* main area */
.main { flex: none; height: 782px; display: flex; }
.side { width: 41px; display: flex; flex-direction: column; align-items: center; padding-right: 5px; gap: 26.400px; }
.side .s-open { margin: 10px 0 13px 20px; }
.splitter { width: 8px; background: #a4a6aa; display: flex; align-items: center; justify-content: center; }
.splitter i { width: 4px; height: 44px; margin-top: -78px; background: radial-gradient(circle, #555 .6px, transparent 1px) 0 0 / 2px 3px; }
.viewer { width: 1850px; display: flex; flex-direction: column; }
.canvas { height: 768px; background: #ababab; border-top: 1px solid #555; overflow: hidden; padding: 8px 0 0 291px; }
.page { position: relative; width: 1191px; height: 780px; border: 1px solid #4b4b4b; background: linear-gradient(#ececec, #e6e6e6 30%, #dadada 98%); font-family: Lato, "Open Sans", sans-serif; color: #231f20; }
.banner { position: absolute; left: 0; top: 0; }
.head { position: relative; height: 178px; display: flex; color: #fff; padding: 16px 0 0 26px; }
.head strong { font: 900 47px/60px Lato, sans-serif; width: 105px; letter-spacing: -1px; transform: scaleX(.91); transform-origin: 0 0; }
.head svg { margin: 12px 12px 0 0; }
.head span { font-size: 50px; line-height: 62px; letter-spacing: 1.200px; }
.columns { position: relative; display: flex; }
.c1 { width: 418px; height: 600px; padding-left: 101.500px; border-right: 2px solid #97c687; margin-top: 1px; }
.c2 { width: 355px; padding-left: 38px; border-right: 2px solid #97c687; margin-top: 1px; }
.c3 { padding-left: 38px; margin-top: 1px; }
h2 { width: 115px; height: 32.500px; margin-left: -14.500px; padding: 0 11px; background: linear-gradient(115deg, #23661a, #40862b); color: #fff; font-size: 23.700px; line-height: 33.500px; white-space: nowrap; letter-spacing: -.3px; }
.c2 h2, .c3 h2 { margin-left: -15px; }
h3 { font-size: 19px; line-height: 25px; font-weight: 700; letter-spacing: -.26px; white-space: nowrap; }
h3 em { font: 700 24px/0 Lato, sans-serif; color: #414042; -webkit-text-stroke: .7px #414042; letter-spacing: .2px; }
h3 small { font-size: 18.500px; }
h3 i { display: inline-block; }
h3 em small:only-child { font-size: 19.500px; }
.g13 { width: 13px; } .g14 { width: 14px; } .g15 { width: 15px; } .g16 { width: 16px; }
ol { list-style: none; counter-reset: n; font-size: 18px; letter-spacing: -.1px; white-space: nowrap; }
li { counter-increment: n; padding-left: 22.500px; position: relative; }
li::before { content: counter(n); position: absolute; left: 0; }
.a { margin-top: 9.500px; }
.loose { line-height: 28.630px; margin-top: 2.800px; }
.b { margin-top: 14.600px; } .c { margin-top: 11.600px; }
.pp { margin-top: 23.200px; width: 243px; } .fs { margin-top: 3.300px; width: 147px; }
.it { font-style: italic; letter-spacing: .3px; padding-left: 12.500px; }
.d { margin-top: 10px; } .loose.last { margin-top: .5px; }
.c2 h3:first-child, .c3 h3:first-child { margin-top: 2.300px; }
.food { margin-top: 16.500px; width: 300px; background: #77787b; padding: 2px; display: grid; gap: 2px; grid-template-columns: 1fr 1fr; grid-template-rows: 36px 60px 36px 65px 35px 61px; font-size: 18px; letter-spacing: -.1px; }
.food span { background: #fff; padding-left: 16px; line-height: 37px; }
.e { margin-top: 16.200px; } .mm { margin-top: 21.600px; width: 205px; letter-spacing: -.1px; } .f { margin-top: 7.800px; }
.tight { line-height: 23px; margin-top: 5.400px; display: flex; flex-direction: column; gap: 5.650px; letter-spacing: -.05px; }
.sd { margin-top: 25.100px; width: 268px; letter-spacing: .2px; }
.verbs { margin-top: 17.500px; width: 286px; height: 67px; border: 2px solid #77787b; background: #fff; padding: 6.800px 0 0 15.500px; display: grid; grid-template-columns: 55px 47.500px 50.500px 63px 40px; grid-auto-rows: 23px; font-size: 18px; line-height: 23px; }
.tight.last { margin-top: 11.200px; letter-spacing: .05px; }

.hscroll { height: 14px; border-top: 1px solid #fff; background: #f0f0f0; display: flex; align-items: center; }
.hbox { width: 8px; height: 13px; border: 1px solid #666; border-bottom: 0; margin-right: 7px; background: #eee; }
.hthumb { width: 1388px; height: 13px; background: #cdcdcd; margin: 0 185px 0 242px; }
.vscroll { width: 13px; background: #f0f0f0; display: flex; flex-direction: column; align-items: center; }
.vbox { width: 13px; height: 9px; border: 1px solid #666; border-right: 0; }
.v-up { margin-top: 8px; }
.vthumb { width: 13px; height: 20px; background: #cdcdcd; margin-top: 241px; }
.v-down { margin-top: 486px; }

/* status bar */
.status { flex: none; height: 30px; display: flex; align-items: center; padding: 4px 0 0 772px; }
.n2 { margin: 0 14px 0 17px; }
.pagebox { width: 142px; height: 24px; border: 1px solid #a6a6a6; background: #fff; display: flex; align-items: center; justify-content: space-between; padding: 1px 4px 0 6px; color: #000; font-size: 15px; letter-spacing: .3px; }
.n3 { margin: 0 19px 0 11px; } .n5 { margin: 0 12px 0 14px; }
.modes { margin-left: auto; display: flex; align-items: center; height: 26px; }
.sel { background: #c2d5f2; margin-left: 10px; } .two { margin-left: 7px; } .four { margin: 0 35px 0 11px; }
.modes span { width: 68px; font-size: 15px; padding-top: 1px; } .slider { margin: -3px 0 0 4px; } .plus { margin: -3px 20px 0 0; }

/* taskbar */
.taskbar { height: 50px; display: flex; color: #fff; background: linear-gradient(90deg, #444 0, #2b2b2b 510px, #3a3a3a 640px, #454545 880px, #20303a 980px, #20303a 1360px, #1e1e1e 1480px, #1e1e1e 1760px, #474747 1900px); font-family: "Noto Sans", sans-serif; }
.start { width: 60px; display: flex; align-items: center; justify-content: center; background: #474848; }
.search { width: 430px; height: 49px; margin-top: 1px; background: #f2f2f2; color: #333; display: flex; align-items: center; gap: 15px; padding-left: 15px; font-size: 17.800px; padding-bottom: 1px; }
.apps { display: flex; margin-left: -1px; }
.app { display: flex; align-items: center; justify-content: center; width: 51px; height: 50px; border-bottom: 3px solid transparent; position: relative; padding-top: 2px; }
.run { border-bottom-color: #7cc8f5; }
.task { margin-left: 5px; } .edge { margin-left: 13px; } .expl { margin-left: 11px; } .chrome { margin-left: 11px; } .teams { margin-left: 11px; padding-top: 5px; }
.foxit { width: 62px; margin-left: 6px; background: #6a6a6a; }
.badge { position: absolute; left: 24px; top: 24px; font-weight: 700; font-size: 13px; }
.pdf { font: 700 8px "Liberation Sans", sans-serif; fill: #fff; }
.tray { margin-left: auto; display: flex; align-items: center; }
.bat { margin-left: 31px; } .up { margin-right: -20px; } .spk { margin-left: 8px; } .net { margin-left: 9px; }
.lang { margin-left: 14px; font-size: 14px; }
.clock { margin-left: 16px; width: 72px; text-align: center; font-size: 14.300px; line-height: 24px; white-space: nowrap; }
.note { margin: 0 31px 0 21px; }
```
